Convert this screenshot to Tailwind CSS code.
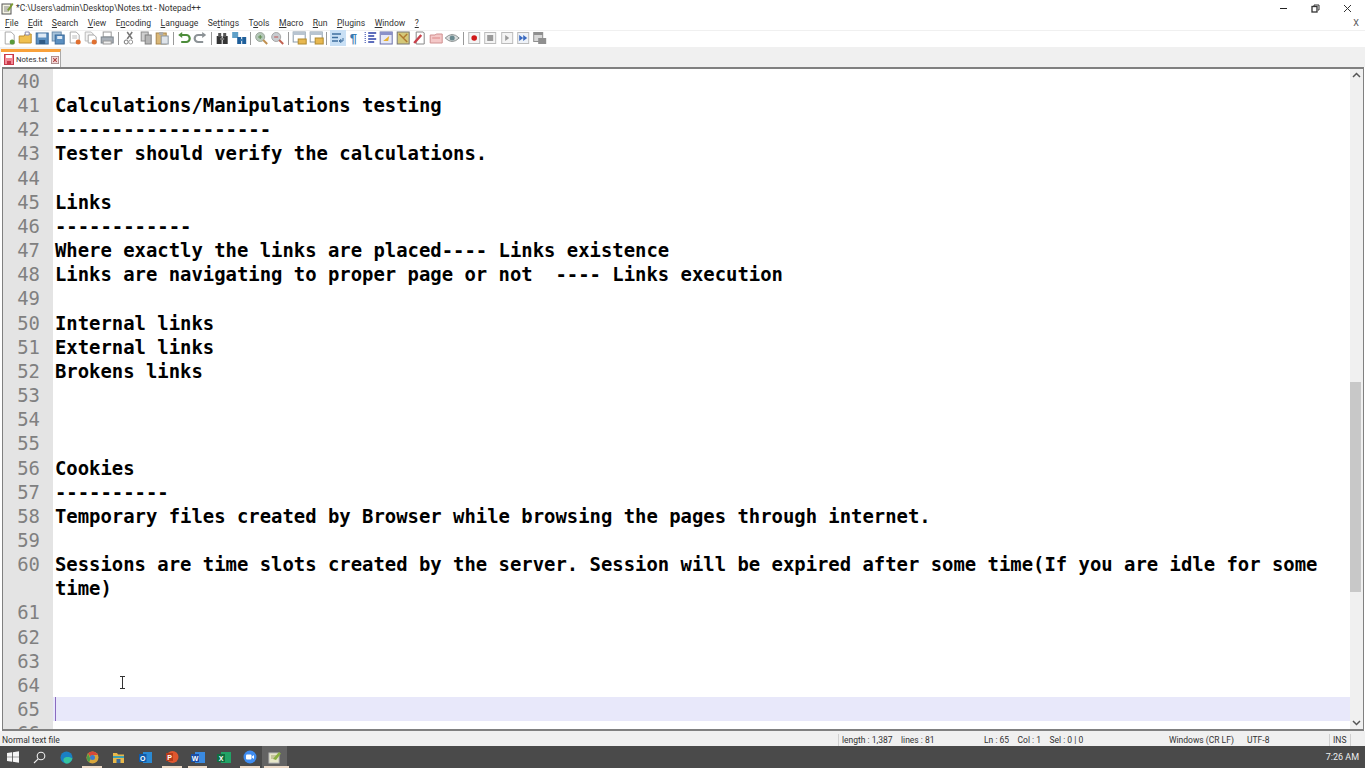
<!doctype html>
<html>
  <head>
    <title>*C:\Users\admin\Desktop\Notes.txt - Notepad++</title>
    <meta charset="UTF-8" />
    <script src="https://cdn.jsdelivr.net/npm/@tailwindcss/browser@4"></script>
  </head>
  <body class="w-[1365px] h-[768px] overflow-hidden bg-white font-['Roboto','Liberation_Sans',sans-serif] text-[#222]">
    <div class="flex flex-col h-[768px]">
      <!-- title bar -->
      <div class="h-[16px] shrink-0 flex items-center">
        <svg class="ml-[1px] w-[13px] h-[14px]" viewBox="0 0 13 14"><rect x="1" y="3" width="9" height="10" fill="#f4f4e4" stroke="#555"/><path d="M3 6h5M3 8h5M3 10h5" stroke="#888"/><path d="M6 9 11 2l1.500 1L8 10z" fill="#7a9a30"/></svg>
        <span class="ml-[2px] text-[8.500px] leading-none text-[#333]">*C:\Users\admin\Desktop\Notes.txt - Notepad++</span>
        <div class="ml-auto flex items-center mr-[13px] gap-[23px]">
          <svg class="w-[9px] h-[9px]" viewBox="0 0 9 9"><path d="M1 4.500h7" stroke="#222"/></svg>
          <svg class="w-[9px] h-[9px]" viewBox="0 0 9 9" fill="none" stroke="#333"><rect x="1" y="2.500" width="5" height="5.500" stroke-width="1.300"/><path d="M3 2V1h5v5H7"/></svg>
          <svg class="w-[9px] h-[9px]" viewBox="0 0 9 9"><path d="M1 1l7 7M8 1 1 8" stroke="#333"/></svg>
        </div>
      </div>
      <!-- menu -->
      <div class="h-[14px] shrink-0 flex items-center text-[8.600px] leading-none text-[#333]">
        <div class="flex pl-[5px] gap-[9.400px]">
          <span><u>F</u>ile</span><span><u>E</u>dit</span><span><u>S</u>earch</span><span><u>V</u>iew</span><span>E<u>n</u>coding</span><span><u>L</u>anguage</span><span>Se<u>t</u>tings</span><span>T<u>o</u>ols</span><span><u>M</u>acro</span><span><u>R</u>un</span><span><u>P</u>lugins</span><span><u>W</u>indow</span><span><u>?</u></span>
        </div>
        <span class="ml-auto mr-[6px] text-[9px] text-[#555]">X</span>
      </div>
      <!-- toolbar -->
      <div class="h-[17px] shrink-0 flex items-center pl-[1px] pb-[2px] border-t border-[#f0f0f0]">
        <svg class="w-[16.400px] h-[14px]" viewBox="0 0 16 14"><path d="M4 1h6l3 3v9H4z" fill="#fff" stroke="#aaa"/><circle cx="11" cy="11" r="2.500" fill="#5a9a3a"/></svg>
        <svg class="w-[16.400px] h-[14px]" viewBox="0 0 16 14"><path d="M2 5h5l1-2h6v9H2z" fill="#f0c050" stroke="#c09030"/><path d="M8 1h4v3H8z" fill="#fff" stroke="#88a"/></svg>
        <svg class="w-[16.400px] h-[14px]" viewBox="0 0 16 14"><rect x="2" y="2" width="12" height="11" fill="#5b8fc0" stroke="#3b6a9a"/><rect x="4" y="2.500" width="8" height="4" fill="#dfeaf5"/><rect x="5" y="9" width="6" height="4" fill="#2f5a85"/></svg>
        <svg class="w-[16.400px] h-[14px]" viewBox="0 0 16 14"><rect x="2" y="1" width="9" height="9" fill="#a8c4dc" stroke="#6a8cab"/><rect x="5" y="4" width="9" height="9" fill="#5b8fc0" stroke="#3b6a9a"/><rect x="7" y="5" width="5" height="3" fill="#dfeaf5"/></svg>
        <svg class="w-[16.400px] h-[14px]" viewBox="0 0 16 14"><path d="M3 1h6l3 3v8H3z" fill="#fff" stroke="#aaa"/><path d="M5 5h5M5 7h5" stroke="#bbb"/><circle cx="11" cy="11" r="2.500" fill="#e07030"/></svg>
        <svg class="w-[16.400px] h-[14px]" viewBox="0 0 16 14"><path d="M2 1h6l2 2v7H2z" fill="#f4f4f4" stroke="#bbb"/><path d="M5 4h6l2 2v6H5z" fill="#fff" stroke="#aaa"/><circle cx="11" cy="11" r="2.500" fill="#e07030"/></svg>
        <svg class="w-[16.400px] h-[14px]" viewBox="0 0 16 14"><rect x="4" y="1" width="8" height="5" fill="#fff" stroke="#999"/><rect x="2" y="6" width="12" height="6" fill="#a9b0b8" stroke="#7d858d"/><rect x="4" y="10" width="8" height="3" fill="#eee" stroke="#999"/></svg>
        <div class="w-[1px] h-[13px] bg-[#999] mx-[2.300px]"></div>
        <svg class="w-[16.400px] h-[14px]" viewBox="0 0 16 14"><path d="M11 1 6 8M6 1l5 7" stroke="#777" stroke-width="1.500"/><circle cx="5" cy="11" r="2" fill="none" stroke="#777"/><circle cx="9.500" cy="11" r="2" fill="none" stroke="#999"/></svg>
        <svg class="w-[16.400px] h-[14px]" viewBox="0 0 16 14"><rect x="3" y="1" width="7" height="9" fill="#cfcfcf" stroke="#8c8c8c"/><rect x="7" y="4" width="6" height="9" fill="#b5b5b5" stroke="#808080"/></svg>
        <svg class="w-[16.400px] h-[14px]" viewBox="0 0 16 14"><rect x="2" y="2" width="10" height="11" fill="#d9b777" stroke="#a8854a"/><rect x="5" y="1" width="4" height="3" fill="#aaa"/><rect x="7" y="5" width="7" height="8" fill="#dfe4ea" stroke="#8c97a3"/></svg>
        <div class="w-[1px] h-[13px] bg-[#999] mx-[2.300px]"></div>
        <svg class="w-[16.400px] h-[14px]" viewBox="0 0 16 14" fill="none"><path d="M5 4h5a3.500 3.500 0 0 1 0 7H5" stroke="#4c8c3a" stroke-width="2.200"/><path d="M2 4l4-3v6z" fill="#4c8c3a"/></svg>
        <svg class="w-[16.400px] h-[14px]" viewBox="0 0 16 14" fill="none"><path d="M11 4H6a3.500 3.500 0 0 0 0 7h5" stroke="#8c9296" stroke-width="2.200"/><path d="M14 4l-4-3v6z" fill="#8c9296"/></svg>
        <div class="w-[1px] h-[13px] bg-[#999] mx-[2.300px]"></div>
        <svg class="w-[16.400px] h-[14px]" viewBox="0 0 16 14"><rect x="2.500" y="5" width="5" height="8" fill="#333"/><rect x="8.500" y="5" width="5" height="8" fill="#333"/><rect x="4" y="2" width="3" height="4" fill="#555"/><rect x="9" y="2" width="3" height="4" fill="#555"/><rect x="6" y="7" width="4" height="2" fill="#777"/></svg>
        <svg class="w-[16.400px] h-[14px]" viewBox="0 0 16 14"><rect x="1" y="1" width="6" height="6" fill="#5fa0c8"/><rect x="6" y="6" width="4" height="7" fill="#1f5f9a"/><rect x="11" y="6" width="4" height="7" fill="#1f5f9a"/><rect x="9" y="8" width="3" height="2" fill="#3a7ab0"/></svg>
        <div class="w-[1px] h-[13px] bg-[#999] mx-[2.300px]"></div>
        <svg class="w-[16.400px] h-[14px]" viewBox="0 0 16 14"><circle cx="7" cy="6" r="4.500" fill="#b4c8b8" stroke="#a0a8a0"/><path d="M10 9l4 4" stroke="#c09050" stroke-width="2"/><path d="M5 6h4M7 4v4" stroke="#5a8a4a"/></svg>
        <svg class="w-[16.400px] h-[14px]" viewBox="0 0 16 14"><circle cx="7" cy="6" r="4.500" fill="#c8ccd0" stroke="#a8a8a8"/><path d="M10 9l4 4" stroke="#c06050" stroke-width="2"/><path d="M5 6h4" stroke="#c05050"/></svg>
        <div class="w-[1px] h-[13px] bg-[#999] mx-[2.300px]"></div>
        <svg class="w-[16.400px] h-[14px]" viewBox="0 0 16 14"><rect x="2" y="1" width="12" height="10" fill="#fff" stroke="#8a9aa8"/><rect x="2" y="1" width="12" height="3" fill="#b8c4d0"/><rect x="7" y="8" width="8" height="5" fill="#e8b850" stroke="#b08a30"/></svg>
        <svg class="w-[16.400px] h-[14px]" viewBox="0 0 16 14"><rect x="2" y="1" width="12" height="10" fill="#fff" stroke="#8a9aa8"/><rect x="2" y="1" width="12" height="3" fill="#b8c4d0"/><rect x="7" y="7" width="8" height="6" fill="#e8b850" stroke="#b08a30"/></svg>
        <div class="w-[1px] h-[13px] bg-[#999] mx-[2.300px]"></div>
        <div class="w-[16.400px] h-[16px] bg-[#c9e0f5] flex items-center justify-center">
          <svg class="w-[13px] h-[12px]" viewBox="0 0 13 12"><path d="M1 2h9M1 5.500h6M1 9h6" stroke="#3f6f9f" stroke-width="1.500"/><path d="M8 9h4V6M8 9l2-1.500v3z" stroke="#3f6f9f" fill="none"/></svg>
        </div>
        <span class="w-[13px] ml-[1px] text-center text-[13px] leading-none font-bold text-[#3a7ab0] font-['Liberation_Sans',sans-serif]">¶</span>
        <svg class="ml-[2px] w-[16.400px] h-[14px]" viewBox="0 0 16 14"><path d="M6 2h8M6 5h6M6 8h8M6 11h6" stroke="#2a3fa8" stroke-width="1.500"/><path d="M3 1v12" stroke="#2a3fa8" stroke-dasharray="1 1"/></svg>
        <svg class="w-[16.400px] h-[14px]" viewBox="0 0 16 14"><rect x="2" y="1" width="12" height="12" fill="#e6e8f8" stroke="#6a70a8"/><rect x="2" y="1" width="12" height="3" fill="#8a90c8"/><path d="M5 10 11 5l-1 5z" fill="#e8b030"/></svg>
        <svg class="w-[16.400px] h-[14px]" viewBox="0 0 16 14"><rect x="2" y="1" width="12" height="12" fill="#d4c878" stroke="#777"/><path d="M4 3l8 8M8 7l4-4" stroke="#b07a30" stroke-width="1.500"/></svg>
        <svg class="w-[16.400px] h-[14px]" viewBox="0 0 16 14"><path d="M5 1h7l1 1v11H5z" fill="#fff" stroke="#888"/><path d="M3 12 10 4" stroke="#c8404a" stroke-width="2.500"/></svg>
        <svg class="w-[16.400px] h-[14px]" viewBox="0 0 16 14"><path d="M2 4h5l1-1h6v9H2z" fill="#f4c8c8" stroke="#d09090"/><path d="M4 7h8" stroke="#d88"/></svg>
        <svg class="w-[16.400px] h-[14px]" viewBox="0 0 16 14"><path d="M1 7q7-7 14 0q-7 7-14 0z" fill="#d8dcdc" stroke="#8a9090"/><circle cx="8" cy="7" r="2.500" fill="#6a8a90"/></svg>
        <div class="w-[1px] h-[13px] bg-[#999] mx-[2.300px]"></div>
        <svg class="w-[16.400px] h-[14px]" viewBox="0 0 16 14"><rect x="2.500" y="1.500" width="11" height="11" fill="#f4f4f4" stroke="#bbb"/><circle cx="8" cy="7" r="2.800" fill="#d01818"/></svg>
        <svg class="w-[16.400px] h-[14px]" viewBox="0 0 16 14"><rect x="2.500" y="1.500" width="11" height="11" fill="#f4f4f4" stroke="#bbb"/><rect x="5" y="4" width="6" height="6" fill="#9a9a9a"/></svg>
        <svg class="w-[16.400px] h-[14px]" viewBox="0 0 16 14"><rect x="2.500" y="1.500" width="11" height="11" fill="#f4f4f4" stroke="#bbb"/><path d="M6 4l4 3-4 3z" fill="#9a9a9a"/></svg>
        <svg class="w-[16.400px] h-[14px]" viewBox="0 0 16 14"><rect x="2.500" y="1.500" width="11" height="11" fill="#eef2f8" stroke="#bbb"/><path d="M4 4l4 3-4 3zM8 4l4 3-4 3z" fill="#3a6ac0"/></svg>
        <svg class="w-[16.400px] h-[14px]" viewBox="0 0 16 14"><rect x="2" y="1" width="10" height="10" fill="#8f8f8f"/><rect x="3" y="4" width="8" height="6" fill="#d8d8d8"/><rect x="7" y="7" width="8" height="6" fill="#8f8f8f"/></svg>
      </div>
      <!-- tab bar -->
      <div class="h-[20px] shrink-0 bg-[#f0f0f0] flex items-end pl-[1px]">
        <div class="w-[60px] h-[18px] bg-white border-t-[3px] border-[#f9a13a] border-r border-r-[#aaa] flex items-center pl-[3px] gap-[2px]">
          <svg class="w-[10px] h-[11px]" viewBox="0 0 10 11"><rect x=".5" y=".5" width="9" height="10" fill="#f08a96" stroke="#c83a4a"/><rect x="2" y="1" width="6" height="3" fill="#fff"/><rect x="3" y="7" width="4" height="3" fill="#c83a4a"/></svg>
          <span class="text-[7.700px] leading-none text-[#333]">Notes.txt</span>
          <svg class="ml-[2px] w-[8px] h-[8px]" viewBox="0 0 9 9"><rect x=".5" y=".5" width="8" height="8" fill="#f4dcdc" stroke="#a88"/><path d="M2.500 2.500l4 4M6.500 2.500l-4 4" stroke="#b04040" stroke-width="1.200"/></svg>
        </div>
      </div>
      <!-- editor -->
      <div class="h-[664px] shrink-0 ml-[2px] mr-[1px] flex border-t-2 border-b-2 border-l border-r border-[#808080] bg-white overflow-hidden font-['DejaVu_Sans_Mono',monospace] text-[18.900px] leading-[24.150px]">
        <div class="w-[50px] shrink-0 bg-[#e4e4e4] text-[#808080] text-right pr-[13px] whitespace-pre">40
41
42
43
44
45
46
47
48
49
50
51
52
53
54
55
56
57
58
59
60

61
62
63
64
65
66</div>
        <div class="relative flex-1 min-w-0 font-bold text-black">
          <div class="pl-[2px]">&nbsp;</div>
          <div class="pl-[2px]">Calculations/Manipulations testing</div>
          <div class="pl-[2px]">-------------------</div>
          <div class="pl-[2px]">Tester should verify the calculations.</div>
          <div class="pl-[2px]">&nbsp;</div>
          <div class="pl-[2px]">Links</div>
          <div class="pl-[2px]">------------</div>
          <div class="pl-[2px]">Where exactly the links are placed---- Links existence</div>
          <div class="pl-[2px] whitespace-pre">Links are navigating to proper page or not  ---- Links execution</div>
          <div class="pl-[2px]">&nbsp;</div>
          <div class="pl-[2px]">Internal links</div>
          <div class="pl-[2px]">External links</div>
          <div class="pl-[2px]">Brokens links</div>
          <div class="pl-[2px]">&nbsp;</div>
          <div class="pl-[2px]">&nbsp;</div>
          <div class="pl-[2px]">&nbsp;</div>
          <div class="pl-[2px]">Cookies</div>
          <div class="pl-[2px]">----------</div>
          <div class="pl-[2px]">Temporary files created by Browser while browsing the pages through internet.</div>
          <div class="pl-[2px]">&nbsp;</div>
          <div class="pl-[2px]">Sessions are time slots created by the server. Session will be expired after some time(If you are idle for some time)</div>
          <div class="pl-[2px]">&nbsp;</div>
          <div class="pl-[2px]">&nbsp;</div>
          <div class="pl-[2px]">&nbsp;</div>
          <div class="pl-[2px]">&nbsp;</div>
          <div class="h-[24.150px] bg-[#e8e8fa] pl-[2px]"><div class="w-[1px] h-full bg-[#8a6ac0]"></div></div>
          <!-- mouse pointer -->
          <svg class="absolute left-[66px] top-[607px] w-[7px] h-[13px]" viewBox="0 0 7 13" fill="none" stroke="#333"><path d="M1 .5h5M3.500.5v12M1 12.500h5"/></svg>
        </div>
        <!-- scrollbar -->
        <div class="w-[13px] shrink-0 bg-[#f0f0f0] flex flex-col relative">
          <svg class="absolute left-[2px] top-[3px] w-[9px] h-[6px]" viewBox="0 0 9 6" fill="none" stroke="#555" stroke-width="1.500"><path d="M1 5l3.500-3.500L8 5"/></svg>
          <div class="absolute left-0 w-[11px] top-[313px] h-[210px] bg-[#c8c8c8]"></div>
          <svg class="absolute left-[2px] bottom-[3px] w-[9px] h-[6px]" viewBox="0 0 9 6" fill="none" stroke="#555" stroke-width="1.500"><path d="M1 1l3.500 3.500L8 1"/></svg>
        </div>
      </div>
      <!-- status bar -->
      <div class="h-[15px] shrink-0 bg-[#f0f0f0] flex items-center pt-[3px] text-[8.500px] leading-none text-[#333] whitespace-pre">
        <div class="w-[838px] pl-[2px]">Normal text file</div>
        <div class="w-[143px] pl-[3px] border-l border-[#d0d0d0] h-full flex items-center">length : 1,387    lines : 81</div>
        <div class="w-[185px] pl-[3px] h-full flex items-center">Ln : 65    Col : 1    Sel : 0 | 0</div>
        <div class="w-[78px] pl-[3px] h-full flex items-center">Windows (CR LF)</div>
        <div class="w-[85px] pl-[3px] h-full flex items-center">UTF-8</div>
        <div class="w-[22px] pl-[3px] border-l border-[#d0d0d0] border-r h-full flex items-center">INS</div>
      </div>
      <!-- taskbar -->
      <div class="h-[22px] shrink-0 bg-[#4a4a4a] relative flex items-center text-white">
        <svg class="ml-[7px] w-[12px] h-[12px]" viewBox="0 0 12 12" fill="#f4f4f4"><path d="M0 2l5-.7V5.700H0zM5.800 1.200 12 .3v5.400H5.800zM0 6.300h5v4.400l-5-.7zM5.800 6.300H12v5.400l-6.200-.9z"/></svg>
        <svg class="ml-[14px] w-[13px] h-[13px]" viewBox="0 0 13 13" fill="none" stroke="#eee" stroke-width="1.100"><circle cx="8" cy="5" r="3.800"/><path d="M5.200 7.800 1 12"/></svg>
        <svg class="ml-[14px] w-[13px] h-[13px]" viewBox="0 0 13 13"><circle cx="6.500" cy="6.500" r="6" fill="#1a7fc4"/><path d="M6 12.500c-3-1-3.500-5-1-6 3-1 6 0 7.500 1-1 3-3.500 5.500-6.500 5z" fill="#35c4a0"/></svg>
        <svg class="ml-[13px] w-[13px] h-[13px]" viewBox="0 0 13 13"><circle cx="6.500" cy="6.500" r="6" fill="#d9a53a"/><path d="M6.500.5a6 6 0 0 1 5.400 3.500H6.500a2.500 2.500 0 0 0-2.400 1.500L2 2.300A6 6 0 0 1 6.500.5z" fill="#d8493a"/><path d="M.8 6.500 2 2.300 4.500 8l-1.500 3.500A6 6 0 0 1 .8 6.500z" fill="#4a9a4a"/><circle cx="6.500" cy="6.500" r="2.500" fill="#3f7cd0"/></svg>
        <svg class="ml-[13px] w-[13px] h-[13px]" viewBox="0 0 13 13"><path d="M1 2h4l1 1.500h6V12H1z" fill="#e8b84a"/><rect x="1" y="5" width="11" height="2" fill="#3fa0b0"/><rect x="4.500" y="8" width="4" height="4" fill="#3a6a9a"/></svg>
        <svg class="ml-[14px] w-[13px] h-[13px]" viewBox="0 0 13 13"><rect x="4" y="1" width="9" height="11" fill="#2a8ad4"/><rect x="0" y="3" width="7.500" height="8" fill="#0f5aa8"/><text x="3.700" y="9.500" text-anchor="middle" font-size="7" font-weight="700" fill="#fff" font-family="Liberation Sans">O</text></svg>
        <svg class="ml-[13px] w-[14px] h-[14px]" viewBox="0 0 14 14"><circle cx="7.500" cy="7" r="6" fill="#e0572e"/><rect x="1" y="3" width="7" height="8" fill="#b83c1a"/><text x="4.500" y="9.800" text-anchor="middle" font-size="7" font-weight="700" fill="#fff" font-family="Liberation Sans">P</text></svg>
        <svg class="ml-[12px] w-[14px] h-[13px]" viewBox="0 0 14 13"><rect x="4" y="1" width="10" height="11" fill="#3a8ae0"/><rect x="0" y="3" width="8" height="8" fill="#1a4ea8"/><text x="4" y="9.500" text-anchor="middle" font-size="7" font-weight="700" fill="#fff" font-family="Liberation Sans">W</text></svg>
        <svg class="ml-[12px] w-[14px] h-[13px]" viewBox="0 0 14 13"><rect x="4" y="1" width="10" height="11" fill="#21a366"/><rect x="0" y="3" width="8" height="8" fill="#107040"/><text x="4" y="9.500" text-anchor="middle" font-size="7" font-weight="700" fill="#fff" font-family="Liberation Sans">X</text></svg>
        <svg class="ml-[12px] w-[14px] h-[14px]" viewBox="0 0 14 14"><circle cx="7" cy="7" r="6.500" fill="#3f8cf0"/><rect x="3" y="4.500" width="5.500" height="5" rx="1" fill="#fff"/><path d="M9 6.500 11 5v4L9 7.500z" fill="#fff"/></svg>
        <div class="ml-[5px] w-[25px] h-full bg-[#636363] flex items-center justify-center">
          <svg class="w-[14px] h-[14px]" viewBox="0 0 14 14"><rect x="1" y="3" width="10" height="10" fill="#e8e8c8" stroke="#bbb"/><path d="M3 6h6M3 8h6" stroke="#a0a070"/><path d="M5 9 11 2l2 1.500L8 10z" fill="#8ab040"/></svg>
        </div>
        <span class="ml-auto mr-[6px] text-[9px] leading-none text-[#eee]">7:26 AM</span>
        <!-- running app markers -->
        <div class="absolute bottom-0 left-[82px] w-[20px] h-[2px] bg-[#ecd9c6]"></div>
        <div class="absolute bottom-0 left-[162px] w-[20px] h-[2px] bg-[#ecd9c6]"></div>
        <div class="absolute bottom-0 left-[188px] w-[19px] h-[2px] bg-[#ecd9c6]"></div>
        <div class="absolute bottom-0 left-[240px] w-[20px] h-[2px] bg-[#ecd9c6]"></div>
        <div class="absolute bottom-0 left-[264px] w-[25px] h-[2px] bg-[#ecd9c6]"></div>
      </div>
    </div>
  </body>
</html>
